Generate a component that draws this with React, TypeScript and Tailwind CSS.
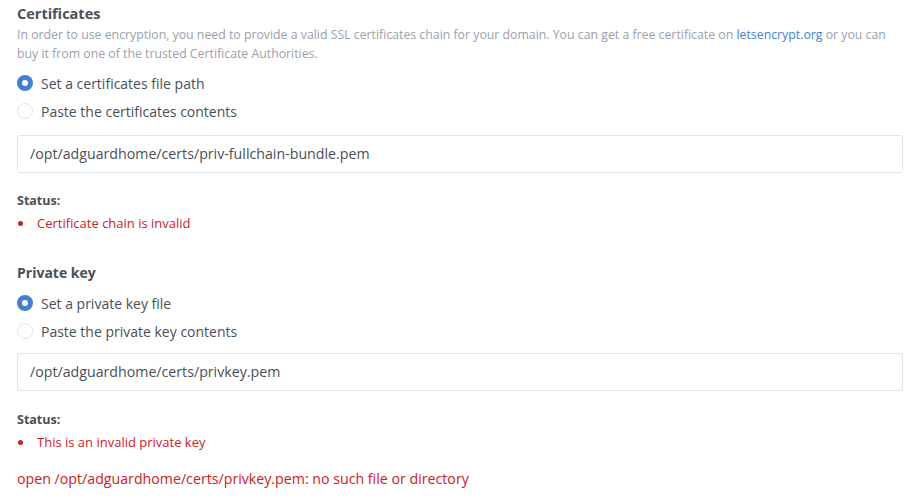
import React from "react";

const font = { fontFamily: '"Open Sans", "Noto Sans", sans-serif' };

function Radio({ checked, label }: { checked?: boolean; label: string }) {
  return (
    <label className="flex items-center h-[28px] text-[14px] text-[#495057]">
      {checked ? (
        <span className="w-[16px] h-[16px] rounded-full bg-[#467fcf] flex items-center justify-center mr-[8px]">
          <span className="w-[6px] h-[6px] rounded-full bg-white" />
        </span>
      ) : (
        <span className="w-[16px] h-[16px] rounded-full border border-[#e0e5ec] bg-white mr-[8px]" />
      )}
      {label}
    </label>
  );
}

function Input({ value }: { value: string }) {
  return (
    <div className="h-[38px] border border-[#e0e5ec] rounded-[3px] flex items-center px-[12px] text-[14.2px] text-[#495057]">
      {value}
    </div>
  );
}

function Status({ msg }: { msg: string }) {
  return (
    <div>
      <div className="text-[12.5px] font-bold text-[#495057] leading-[18px]">Status:</div>
      <ul className="mt-[4px]">
        <li className="flex items-center text-[13px] text-[#cd201f] leading-[18px]">
          <span className="w-[5px] h-[5px] rounded-full bg-[#cd201f] ml-[1px] mr-[14px]" />
          {msg}
        </li>
      </ul>
    </div>
  );
}

export default function App() {
  return (
    <div className="w-[909px] h-[502px] bg-white pl-[17px] pr-[6px] pt-[3px]" style={font}>
      <div className="text-[14.5px] font-bold text-[#495057] leading-[22px]">Certificates</div>
      <div className="text-[12.3px] text-[#9aa0ac] leading-[19px]">
        In order to use encryption, you need to provide a valid SSL certificates chain for your domain. You can get a free certificate on{" "}
        <span className="text-[#467fcf]">letsencrypt.org</span> or you can buy it from one of the trusted Certificate Authorities.
      </div>
      <div className="mt-[6px]">
        <Radio checked label="Set a certificates file path" />
        <Radio label="Paste the certificates contents" />
      </div>
      <div className="mt-[10px]">
        <Input value="/opt/adguardhome/certs/priv-fullchain-bundle.pem" />
      </div>
      <div className="mt-[19px]">
        <Status msg="Certificate chain is invalid" />
      </div>
      <div className="mt-[30px] text-[14px] font-bold text-[#495057] leading-[22px]">Private key</div>
      <div className="mt-[5px]">
        <Radio checked label="Set a private key file" />
        <Radio label="Paste the private key contents" />
      </div>
      <div className="mt-[8px]">
        <Input value="/opt/adguardhome/certs/privkey.pem" />
      </div>
      <div className="mt-[20px]">
        <Status msg="This is an invalid private key" />
      </div>
      <div className="mt-[17px] text-[14.2px] text-[#cd201f] leading-[22px]">
        open /opt/adguardhome/certs/privkey.pem: no such file or directory
      </div>
    </div>
  );
}
